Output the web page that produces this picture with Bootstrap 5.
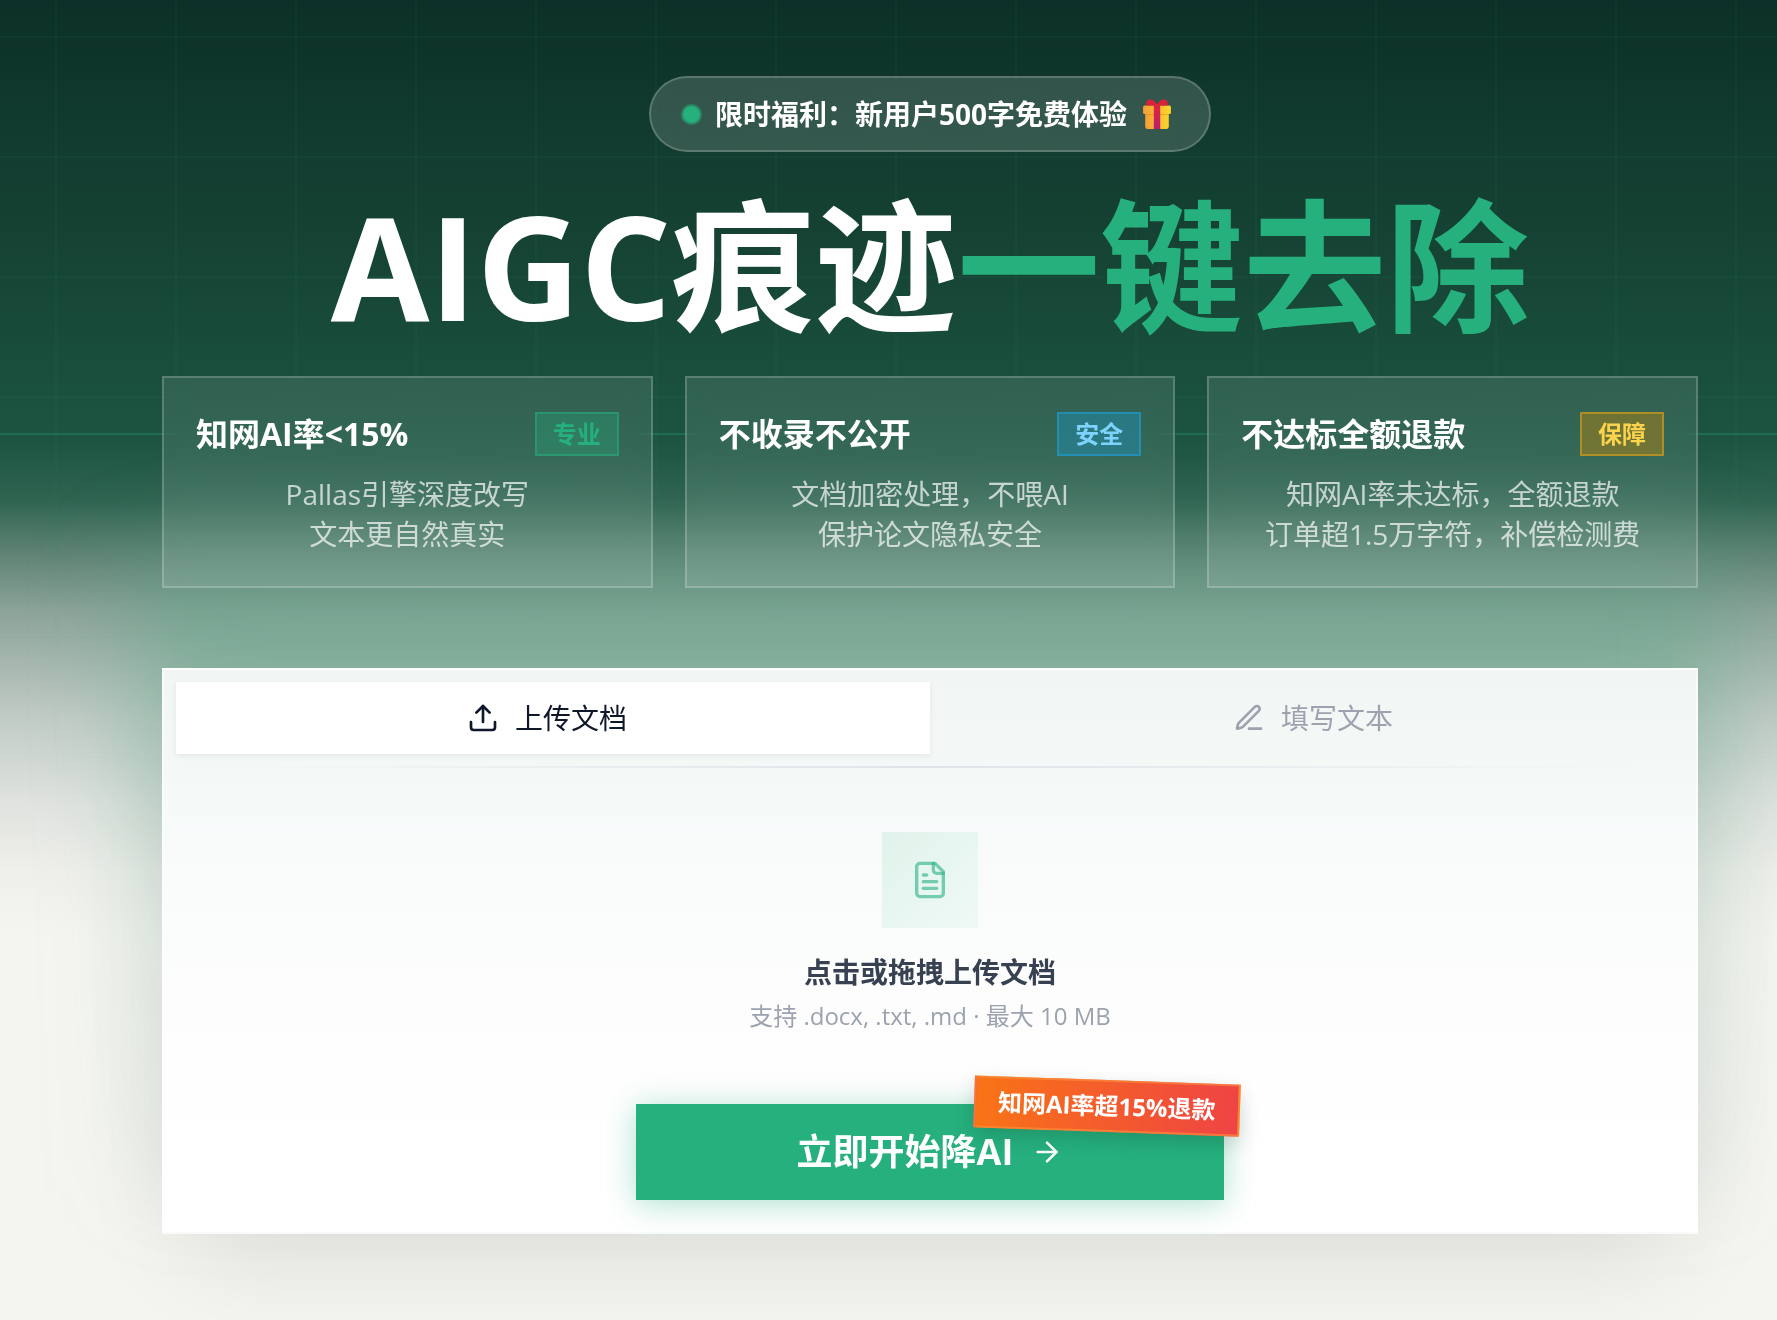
<!DOCTYPE html>
<html lang="zh-CN">
<head>
<meta charset="utf-8">
<meta name="viewport" content="width=device-width, initial-scale=1">
<title>AIGC痕迹一键去除</title>
<link href="https://cdn.jsdelivr.net/npm/bootstrap@5.3.0/dist/css/bootstrap.min.css" rel="stylesheet">
<style>
  :root { --brand: #26b07e; }
  body {
    font-family: "Open Sans", "Noto Sans CJK SC", sans-serif;
    background-color: #f5f5f0;
    overflow-x: hidden;
  }
  .landing {
    position: relative;
    isolation: isolate;
    min-height: 100vh;
    padding: 76px 79px 86px 162px;
    overflow: hidden;
    background: linear-gradient(180deg, #0c3027 0, #113a2e 120px, #164435 260px, #1a503e 390px, #1c5341 440px, #2f6451 500px, #5c8172 550px, #8ba398 610px, #a4b6ad 660px, #c2ccc6 720px, #dfe2de 800px, #efefeb 870px, #f5f5f0 940px);
  }
  /* fine grid fading out behind the form */
  .landing::before {
    content: "";
    position: absolute;
    inset: 0 0 auto 0;
    height: 800px;
    z-index: -2;
    background:
      linear-gradient(rgba(38, 176, 126, .28), rgba(38, 176, 126, .28)) 0 433px / 100% 2px no-repeat,
      linear-gradient(90deg, rgba(38, 176, 126, .06) 2px, transparent 2px) 55px 0 / 120px 120px,
      linear-gradient(rgba(38, 176, 126, .06) 2px, transparent 2px) 0 36px / 120px 120px;
    -webkit-mask-image: linear-gradient(#000 440px, transparent);
    mask-image: linear-gradient(#000 440px, transparent);
  }
  .offer-pill {
    height: 76px;
    padding: 0 38px 0 32px;
    font-size: 28px;
    background: rgba(255, 255, 255, .15);
    border: 2px solid rgba(255, 255, 255, .2);
    backdrop-filter: blur(12px);
  }
  .offer-dot {
    width: 17px;
    height: 17px;
    margin-right: 15px;
    border-radius: 50%;
    background: var(--brand);
    box-shadow: 0 0 0 2px rgba(38, 176, 126, .5);
  }
  .hero-title {
    margin: 34px 0 30px;
    font-size: 143px;
    line-height: 160px;
  }
  .text-brand { color: var(--brand); }
  .features { --bs-gutter-x: 32px; --bs-gutter-y: 32px; }
  .feature {
    padding: 32px;
    background: rgba(255, 255, 255, .1);
    border: 2px solid rgba(255, 255, 255, .2);
    backdrop-filter: blur(12px);
  }
  .feature-head { min-height: 48px; margin-bottom: 16px; }
  .feature-head h2 { font-size: 32px; line-height: 48px; }
  .feature p {
    font-size: 28px;
    line-height: 40px;
    color: rgba(255, 255, 255, .7);
  }
  .feature-tag {
    padding: 0 16px;
    font-size: 24px;
    line-height: 40px;
    border: 2px solid;
  }
  .tag-pro { color: var(--brand); background: rgba(38, 176, 126, .3); border-color: rgba(38, 176, 126, .5); }
  .tag-safe { color: #7dd3fc; background: rgba(30, 150, 200, .4); border-color: rgba(30, 155, 205, .65); }
  .tag-sure { color: #fcd34d; background: rgba(202, 138, 4, .4); border-color: rgba(217, 160, 30, .6); }

  .workbench {
    position: relative;
    margin-top: 80px;
    padding-bottom: 32px;
    border: 2px solid rgba(255, 255, 255, .6);
    background: linear-gradient(180deg, #f1f6f4 0, #f4f9f8 100px, #f9fbfb 190px, #fcfdfc 330px, #fff 480px);
    box-shadow: 0 40px 100px -24px rgba(0, 0, 0, .11);
  }
  /* soft green halo round the card, strongest at its top */
  .workbench::before {
    content: "";
    position: absolute;
    inset: -110px -32px 40px;
    z-index: -1;
    background: linear-gradient(180deg, rgba(70, 160, 125, .36), rgba(80, 165, 130, .34) 25%, rgba(80, 165, 130, .16) 50%, rgba(80, 140, 120, .08));
    filter: blur(48px);
  }
  .tab-btn {
    position: relative;
    isolation: isolate;
    height: 96px;
    gap: 16px;
    font-size: 28px;
    color: #9ca3af;
    background: none;
    border: 0;
  }
  .tab-btn.active { color: #0f172a; }
  .tab-btn.active::before {
    content: "";
    position: absolute;
    inset: 12px 0 12px 12px;
    z-index: -1;
    background: #fff;
    box-shadow: 0 2px 6px rgba(0, 0, 0, .07);
  }
  .fade-rule {
    height: 2px;
    background: linear-gradient(90deg, transparent 3%, #e0e3e8 50%, transparent 97%);
  }
  .drop-zone { padding: 64px 0 40px; cursor: pointer; }
  .drop-icon {
    width: 96px;
    height: 96px;
    margin-bottom: 24px;
    background: linear-gradient(135deg, #e0f3eb, #eff9f6);
  }
  .drop-title { font-size: 28px; line-height: 40px; color: #374151; margin-bottom: 8px; }
  .drop-note { font-size: 24px; line-height: 32px; color: #9ca3af; }
  .start-btn {
    position: relative;
    width: 588px;
    max-width: 100%;
    height: 96px;
    margin-top: 32px;
    gap: 18px;
    font-size: 36px;
    color: #fff;
    background: var(--brand);
    border: 0;
    box-shadow: 0 4px 32px rgba(38, 176, 126, .38);
  }
  .refund-flag {
    position: absolute;
    top: -24px;
    right: -16px;
    padding: 8px 22px;
    font-size: 24px;
    line-height: 32px;
    white-space: nowrap;
    border: 2px solid rgba(251, 146, 60, .6);
    background: linear-gradient(90deg, #f97316, #ef4444);
    box-shadow: 0 8px 20px rgba(0, 0, 0, .15);
    transform: rotate(2deg);
  }
  .line-icon { fill: none; stroke: currentColor; stroke-width: 2; stroke-linecap: round; stroke-linejoin: round; }
</style>
</head>
<body>
<main class="landing">
  <header class="text-center text-white">
    <div class="offer-pill d-inline-flex align-items-center rounded-pill fw-bold">
      <span class="offer-dot"></span>
      <span>限时福利：新用户500字免费体验</span>
      <svg class="ms-3" width="28" height="30" viewBox="0 0 26 28" aria-label="礼物">
        <defs>
          <linearGradient id="giftBox" x1="0" x2="1"><stop offset="0" stop-color="#f59e38"/><stop offset="1" stop-color="#fbd52c"/></linearGradient>
          <linearGradient id="giftBow" x1="0" y1="0" x2="0" y2="1"><stop offset="0" stop-color="#e3243b"/><stop offset="1" stop-color="#b81f72"/></linearGradient>
        </defs>
        <path d="M2 11h22v15a2 2 0 0 1-2 2H4a2 2 0 0 1-2-2z" fill="url(#giftBox)"/>
        <rect y="6" width="26" height="8" rx="1.5" fill="url(#giftBox)"/>
        <path d="M2 14h22v1H2z" fill="#d97a1c" opacity=".4"/>
        <path d="M12 6H3C2 2 5-1 9 1c2 1 3 3 4 4 1-1 2-3 4-4 4-2 7 1 6 5z" fill="#dc2038"/>
        <path d="M10 5h6v23h-6z" fill="url(#giftBow)"/>
      </svg>
    </div>
    <h1 class="hero-title fw-bold">AIGC痕迹<span class="text-brand">一键去除</span></h1>
  </header>

  <section class="row features text-white">
    <div class="col-md-4">
      <article class="feature h-100">
        <div class="feature-head d-flex align-items-center justify-content-between">
          <h2 class="fw-bold m-0">知网AI率&lt;15%</h2>
          <span class="feature-tag tag-pro fw-bold">专业</span>
        </div>
        <p class="text-center m-0">Pallas引擎深度改写<br>文本更自然真实</p>
      </article>
    </div>
    <div class="col-md-4">
      <article class="feature h-100">
        <div class="feature-head d-flex align-items-center justify-content-between">
          <h2 class="fw-bold m-0">不收录不公开</h2>
          <span class="feature-tag tag-safe fw-bold">安全</span>
        </div>
        <p class="text-center m-0">文档加密处理，不喂AI<br>保护论文隐私安全</p>
      </article>
    </div>
    <div class="col-md-4">
      <article class="feature h-100">
        <div class="feature-head d-flex align-items-center justify-content-between">
          <h2 class="fw-bold m-0">不达标全额退款</h2>
          <span class="feature-tag tag-sure fw-bold">保障</span>
        </div>
        <p class="text-center m-0">知网AI率未达标，全额退款<br>订单超1.5万字符，补偿检测费</p>
      </article>
    </div>
  </section>

  <section class="workbench">
    <div class="d-flex" role="tablist">
      <button type="button" role="tab" aria-selected="true" class="tab-btn active flex-fill w-50 d-flex align-items-center justify-content-center">
        <svg class="line-icon" width="32" height="32" viewBox="0 0 24 24"><path d="M21 15v4a2 2 0 0 1-2 2H5a2 2 0 0 1-2-2v-4"/><path d="m17 8-5-5-5 5"/><path d="M12 3v12"/></svg>
        上传文档
      </button>
      <button type="button" role="tab" aria-selected="false" class="tab-btn flex-fill w-50 d-flex align-items-center justify-content-center">
        <svg class="line-icon" width="32" height="32" viewBox="0 0 24 24"><path d="M12 20h9"/><path d="M16.376 3.622a1 1 0 0 1 3.002 3.002L7.368 18.635a2 2 0 0 1-.855.506l-2.872.838a.5.5 0 0 1-.62-.62l.838-2.872a2 2 0 0 1 .506-.854z"/></svg>
        填写文本
      </button>
    </div>
    <div class="fade-rule"></div>
    <label class="drop-zone d-flex flex-column align-items-center text-center" for="docFile">
      <input class="visually-hidden" type="file" id="docFile" accept=".docx,.txt,.md">
      <span class="drop-icon text-brand d-flex align-items-center justify-content-center">
        <svg class="line-icon" width="40" height="40" viewBox="0 0 24 24" stroke-opacity=".6"><path d="M15 2H6a2 2 0 0 0-2 2v16a2 2 0 0 0 2 2h12a2 2 0 0 0 2-2V7z"/><path d="M14 2v4a2 2 0 0 0 2 2h4"/><path d="M10 9H8"/><path d="M16 13H8"/><path d="M16 17H8"/></svg>
      </span>
      <span class="drop-title fw-bold">点击或拖拽上传文档</span>
      <span class="drop-note">支持 .docx, .txt, .md · 最大 10 MB</span>
    </label>
    <button type="button" class="start-btn fw-bold d-flex align-items-center justify-content-center mx-auto">
      立即开始降AI
      <svg class="line-icon" width="32" height="32" viewBox="0 0 24 24"><path d="M5 12h14"/><path d="m12 5 7 7-7 7"/></svg>
      <span class="refund-flag">知网AI率超15%退款</span>
    </button>
  </section>
</main>
<script src="https://cdn.jsdelivr.net/npm/bootstrap@5.3.0/dist/js/bootstrap.bundle.min.js"></script>
</body>
</html>
